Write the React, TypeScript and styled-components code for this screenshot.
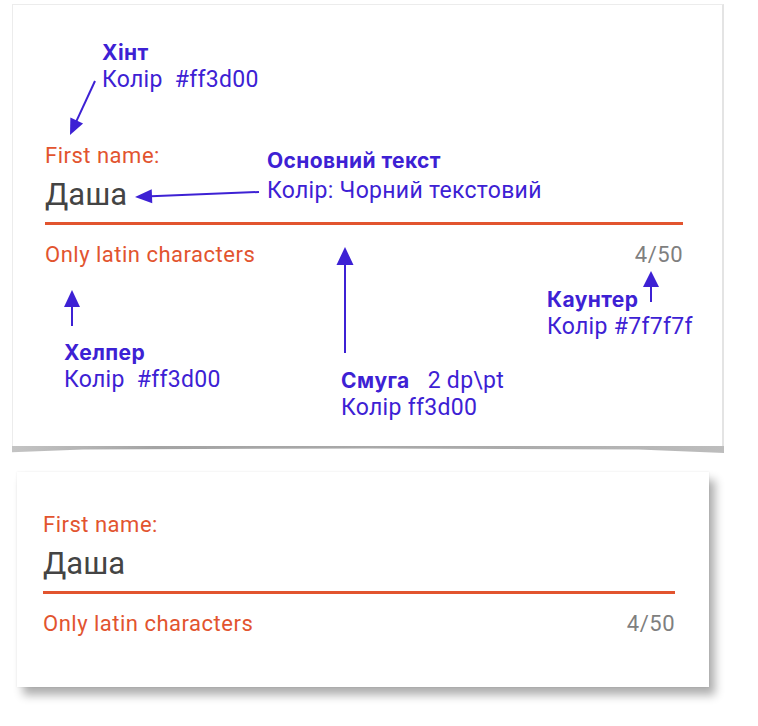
import React from "react";
import styled, { createGlobalStyle } from "styled-components";

const ACCENT = "#e2542f";
const NOTE = "#3d21d4";

const GlobalStyle = createGlobalStyle`
  body {
    margin: 0;
    background: #ffffff;
    font-family: Roboto, "Liberation Sans", sans-serif;
  }
`;

const Page = styled.div`
  display: flex;
  flex-direction: column;
  align-items: flex-start;
  gap: 25px;
  padding: 4px 0 39px 12px;
`;

const SpecCard = styled.section`
  position: relative;
  box-sizing: border-box;
  width: 712px;
  height: 443px;
  padding: 138px 39px 0 32px;
  background: #fff;
  border: 1px solid #ececec;
  border-right: 2px solid #e4e4e4;

  &::after {
    content: "";
    position: absolute;
    left: -1px;
    right: -2px;
    top: 100%;
    height: 7px;
    background: linear-gradient(to right, #c4c4c4, #a4a4a4 20%, #ababab 70%, #bdbdbd);
    clip-path: polygon(0 0, 100% 0, 100% 100%, 88% 50%, 50% 35%, 10% 50%, 0 90%);
  }
`;

const DemoCard = styled.section`
  box-sizing: border-box;
  width: 692px;
  height: 215px;
  margin-left: 5px;
  padding: 40px 34px 0 26px;
  background: #fff;
  box-shadow: 0 0 2px rgba(0, 0, 0, 0.08), 6px 8px 9px rgba(0, 0, 0, 0.32);
`;

const Field = styled.div`
  display: flex;
  flex-direction: column;
`;

const FieldLabel = styled.div`
  font-size: 22px;
  line-height: 26px;
  letter-spacing: 0.5px;
  color: ${ACCENT};
`;

const FieldValue = styled.div`
  margin-top: 8px;
  font-size: 31px;
  line-height: 36px;
  color: #444444;
`;

const Underline = styled.div`
  margin-top: 9px;
  height: 3px;
  background: ${ACCENT};
`;

const HelperRow = styled.div`
  display: flex;
  justify-content: space-between;
  margin-top: 17px;
  font-size: 22px;
  line-height: 26px;
  letter-spacing: 0.5px;
`;

const Helper = styled.span`
  color: ${ACCENT};
`;

const Counter = styled.span`
  color: #7f7f7f;
`;

const Note = styled.div<{ $x: number; $y: number }>`
  position: absolute;
  left: ${(p) => p.$x}px;
  top: ${(p) => p.$y}px;
  color: ${NOTE};
  white-space: nowrap;
`;

const NoteTitle = styled.div`
  font-family: Inter, Roboto, sans-serif;
  font-size: 21px;
  font-weight: 700;
  line-height: 27px;
  letter-spacing: 0.4px;
`;

const NoteText = styled.div<{ $gap?: number }>`
  margin-top: ${(p) => p.$gap ?? 0}px;
  font-size: 23px;
  line-height: 27px;
  letter-spacing: 0.3px;
`;

const NoteExtra = styled.span`
  margin-left: 18px;
  font-family: Roboto, "Liberation Sans", sans-serif;
  font-size: 23px;
  font-weight: 400;
  letter-spacing: 0.3px;
`;

const ArrowLayer = styled.svg`
  position: absolute;
  inset: 0;
  width: 100%;
  height: 100%;
  pointer-events: none;
  overflow: visible;
`;

type ArrowProps = { x1: number; y1: number; x2: number; y2: number; len?: number; wide?: number };

// tail (x1,y1) -> tip (x2,y2)
const Arrow = ({ x1, y1, x2, y2, len = 17, wide = 15 }: ArrowProps) => {
  const dx = x2 - x1;
  const dy = y2 - y1;
  const d = Math.hypot(dx, dy);
  const ux = dx / d;
  const uy = dy / d;
  const bx = x2 - ux * len;
  const by = y2 - uy * len;
  const px = -uy * (wide / 2);
  const py = ux * (wide / 2);
  return (
    <g>
      <line x1={x1} y1={y1} x2={bx + ux} y2={by + uy} stroke={NOTE} strokeWidth={2} />
      <polygon points={`${x2},${y2} ${bx + px},${by + py} ${bx - px},${by - py}`} fill={NOTE} />
    </g>
  );
};

const TextField = () => (
  <Field>
    <FieldLabel>First name:</FieldLabel>
    <FieldValue>Даша</FieldValue>
    <Underline />
    <HelperRow>
      <Helper>Only latin characters</Helper>
      <Counter>4/50</Counter>
    </HelperRow>
  </Field>
);

const App = () => (
  <>
    <GlobalStyle />
    <Page>
      <SpecCard>
        <TextField />

        <Note $x={89} $y={34}>
          <NoteTitle>Хінт</NoteTitle>
          <NoteText>Колір&nbsp; #ff3d00</NoteText>
        </Note>
        <Note $x={254} $y={142}>
          <NoteTitle>Основний текст</NoteTitle>
          <NoteText $gap={3}>Колір: Чорний текстовий</NoteText>
        </Note>
        <Note $x={51} $y={334}>
          <NoteTitle>Хелпер</NoteTitle>
          <NoteText>Колір&nbsp; #ff3d00</NoteText>
        </Note>
        <Note $x={328} $y={362}>
          <NoteTitle>
            Смуга<NoteExtra>2 dp\pt</NoteExtra>
          </NoteTitle>
          <NoteText>Колір ff3d00</NoteText>
        </Note>
        <Note $x={534} $y={281}>
          <NoteTitle>Каунтер</NoteTitle>
          <NoteText>Колір #7f7f7f</NoteText>
        </Note>

        <ArrowLayer>
          <Arrow x1={82} y1={76} x2={57} y2={130} len={16} wide={14} />
          <Arrow x1={246} y1={187} x2={122} y2={192} len={17} wide={14} />
          <Arrow x1={59} y1={321} x2={59} y2={285} len={17} wide={16} />
          <Arrow x1={332} y1={348} x2={332} y2={242} len={18} wide={17} />
          <Arrow x1={638} y1={297} x2={638} y2={266} len={16} wide={16} />
        </ArrowLayer>
      </SpecCard>

      <DemoCard>
        <TextField />
      </DemoCard>
    </Page>
  </>
);

export default App;
